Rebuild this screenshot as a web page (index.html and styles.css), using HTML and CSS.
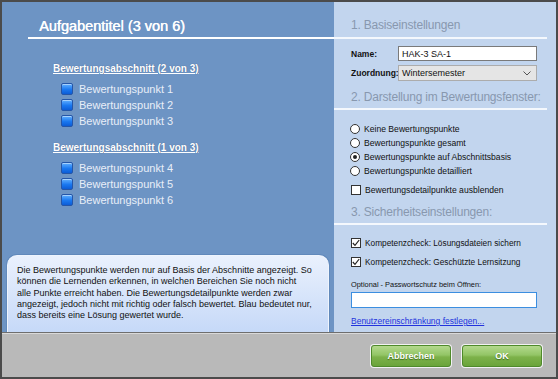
FILE: index.html
```html
<!DOCTYPE html>
<html lang="de">
<head>
<meta charset="utf-8">
<title>Aufgabe</title>
<link rel="stylesheet" href="styles.css">
</head>
<body>
<div class="window">
  <div class="main">
    <section class="left">
      <h1 class="title">Aufgabentitel (3 von 6)</h1>
      <div class="sections">
        <div class="sec">
          <h2 class="sec-head">Bewertungsabschnitt (2 von 3)</h2>
          <ul class="points">
            <li><span class="sq"></span>Bewertungspunkt 1</li>
            <li><span class="sq"></span>Bewertungspunkt 2</li>
            <li><span class="sq"></span>Bewertungspunkt 3</li>
          </ul>
        </div>
        <div class="sec sec2">
          <h2 class="sec-head">Bewertungsabschnitt (1 von 3)</h2>
          <ul class="points">
            <li><span class="sq"></span>Bewertungspunkt 4</li>
            <li><span class="sq"></span>Bewertungspunkt 5</li>
            <li><span class="sq"></span>Bewertungspunkt 6</li>
          </ul>
        </div>
      </div>
      <div class="info">
        <p>Die Bewertungspunkte werden nur auf Basis der Abschnitte angezeigt. So<br>können die Lernenden erkennen, in welchen Bereichen Sie noch nicht<br>alle Punkte erreicht haben. Die Bewertungsdetailpunkte werden zwar<br>angezeigt, jedoch nicht mit richtig oder falsch bewertet. Blau bedeutet nur,<br>dass bereits eine Lösung gewertet wurde.</p>
      </div>
    </section>
    <section class="right">
      <h3 class="head head1">1. Basiseinstellungen</h3>
      <div class="row row-name"><span class="lbl">Name:</span><div class="field">HAK-3 SA-1</div></div>
      <div class="row row-sel"><span class="lbl">Zuordnung:</span><div class="select"><span>Wintersemester</span><svg width="8" height="5" viewBox="0 0 8 5"><polyline points="0.5,0.5 4,4 7.5,0.5" fill="none" stroke="#555" stroke-width="1"/></svg></div></div>
      <h3 class="head head2">2. Darstellung im Bewertungsfenster:</h3>
      <div class="radios">
        <div class="opt"><span class="radio"></span>Keine Bewertungspunkte</div>
        <div class="opt"><span class="radio"></span>Bewertungspunkte gesamt</div>
        <div class="opt"><span class="radio on"></span>Bewertungspunkte auf Abschnittsbasis</div>
        <div class="opt"><span class="radio"></span>Bewertungspunkte detailliert</div>
      </div>
      <div class="opt chk-hide"><span class="box"></span>Bewertungsdetailpunkte ausblenden</div>
      <h3 class="head head3">3. Sicherheitseinstellungen:</h3>
      <div class="opt chk chk1"><span class="box"><svg width="8" height="8" viewBox="0 0 8 8"><polyline points="0.8,4 3,6.3 7.2,1" fill="none" stroke="#222" stroke-width="1.2"/></svg></span>Kompetenzcheck: Lösungsdateien sichern</div>
      <div class="opt chk chk2"><span class="box"><svg width="8" height="8" viewBox="0 0 8 8"><polyline points="0.8,4 3,6.3 7.2,1" fill="none" stroke="#222" stroke-width="1.2"/></svg></span>Kompetenzcheck: Geschützte Lernsitzung</div>
      <div class="pw-label">Optional - Passwortschutz beim Öffnen:</div>
      <div class="pw"></div>
      <a class="link" href="#">Benutzereinschränkung festlegen...</a>
    </section>
  </div>
  <footer class="bar">
    <button class="btn">Abbrechen</button>
    <button class="btn">OK</button>
  </footer>
</div>
</body>
</html>
```

FILE: styles.css
```css
* { box-sizing: border-box; }
html, body { margin: 0; padding: 0; }
body {
  font-family: "Liberation Sans", Arial, sans-serif;
  background: #4a4a4a;
}
.window {
  width: 558px;
  height: 379px;
  border: 2px solid #4b4b4b;
  display: flex;
  flex-direction: column;
  overflow: hidden;
}
.main {
  height: 330px;
  display: flex;
}
.left {
  width: 332px;
  background: #6d94c4;
  display: flex;
  flex-direction: column;
}
.title {
  margin: 16px 0 0 26px;
  padding: 0 0 2px 11px;
  font-size: 14.5px;
  line-height: 17px;
  font-weight: normal;
  color: #fff;
  text-shadow: 0.4px 0 0 #fff;
  border-bottom: 2px solid #fff;
}
.sections { padding: 23px 0 0 51px; }
.sec2 { margin-top: 12px; }
.sec-head {
  margin: 0;
  font-size: 10px;
  line-height: 13px;
  font-weight: bold;
  color: #fff;
  text-decoration: underline;
  text-shadow: 0 0 1px rgba(40,60,100,.6);
}
.points { list-style: none; margin: 6px 0 0; padding: 0 0 0 8px; }
.points li {
  height: 16px;
  display: flex;
  align-items: center;
  gap: 6px;
  font-size: 11px;
  color: #e8eef8;
}
.sq {
  width: 12px;
  height: 12px;
  border-radius: 2px;
  border: 1px solid #2556a8;
  background: linear-gradient(#62b0ff, #1a78f0 55%, #0c5cd6);
  box-shadow: inset 0 1px 0 rgba(255,255,255,.45);
}
.info {
  margin: auto 0 0 5px;
  width: 322px;
  height: 77px;
  border: 1px solid #eef4fd;
  border-bottom: none;
  border-radius: 10px 10px 0 0;
  background: linear-gradient(#eaf1fd, #c6d9f8);
  box-shadow: 0 0 0 1px #6189bb;
  padding: 9px 4px 0 9px;
}
.info p {
  margin: 0;
  font-size: 9px;
  line-height: 11.25px;
  white-space: nowrap;
  color: #111;
}
.right {
  flex: 1;
  background: #c2d5ee;
  padding-top: 16px;
  font-size: 8.6px;
  color: #111;
}
.head {
  margin: 0 9px 0 0;
  padding: 0 0 5px 17px;
  font-size: 12px;
  line-height: 14px;
  font-weight: normal;
  letter-spacing: -0.2px;
  color: #8898ae;
  border-bottom: 2px solid #f4f8fd;
}
.row {
  display: flex;
  align-items: center;
  padding-left: 17px;
}
.row-name { margin-top: 7px; height: 15px; }
.row-sel { margin-top: 4px; height: 16px; }
.lbl { width: 47px; flex-shrink: 0; font-weight: bold; font-size: 8.5px; }
.field, .select {
  width: 139px;
  height: 100%;
  display: flex;
  align-items: center;
  padding-left: 3px;
  font-size: 9px;
}
.field { background: #fff; border: 1px solid #7a7a7a; }
.select {
  background: #e5e5e5;
  border: 1px solid #acacac;
  justify-content: space-between;
  padding-right: 5px;
}
.head2 { margin-top: 9px; padding-bottom: 4px; }
.radios { margin-top: 12px; }
.opt {
  height: 14px;
  display: flex;
  align-items: center;
  gap: 4px;
  padding-left: 16px;
  font-size: 8.6px;
}
.radio {
  width: 10px;
  height: 10px;
  border-radius: 50%;
  border: 1px solid #333;
  background: #fff;
  display: flex;
  align-items: center;
  justify-content: center;
}
.radio.on::after {
  content: "";
  width: 4px;
  height: 4px;
  border-radius: 50%;
  background: #222;
}
.box {
  width: 10px;
  height: 10px;
  border: 1px solid #333;
  background: #fff;
  margin-left: 1px;
  display: flex;
  align-items: center;
  justify-content: center;
}
.chk-hide { margin-top: 5px; }
.head3 { margin-top: 8px; padding-bottom: 4px; }
.chk1 { margin-top: 11px; }
.chk { font-size: 8.3px; }
.chk2 { margin-top: 5px; }
.pw-label {
  margin-top: 11px;
  padding-left: 17px;
  font-size: 7.4px;
  line-height: 10px;
}
.pw {
  margin: 2px 0 0 17px;
  width: 186px;
  height: 16px;
  background: #fff;
  border: 1px solid #3b8ee0;
}
.link {
  display: block;
  margin: 8px 0 0 17px;
  font-size: 8.5px;
  line-height: 11px;
  color: #2233dd;
  text-decoration: underline;
}
.bar {
  flex: 1;
  background: #b9b9b9;
  border-top: 1px solid #6e6e6e;
  box-shadow: inset 0 1px 0 #d9d9d9;
  display: flex;
  justify-content: flex-end;
  align-items: flex-start;
  gap: 11px;
  padding: 12px 14px 0 0;
}
.btn {
  width: 80px;
  height: 22px;
  border: 1px solid #4f8a2b;
  border-radius: 3px;
  background: linear-gradient(#b3d98d, #93c566 45%, #7db24a 55%, #6aa43a);
  box-shadow: 0 0 0 1px #f2f2f2;
  color: #fff;
  font-family: "Liberation Sans", Arial, sans-serif;
  font-size: 9px;
  font-weight: bold;
  text-shadow: 0 1px 1px #3c6a1c;
  padding: 0;
}
```
